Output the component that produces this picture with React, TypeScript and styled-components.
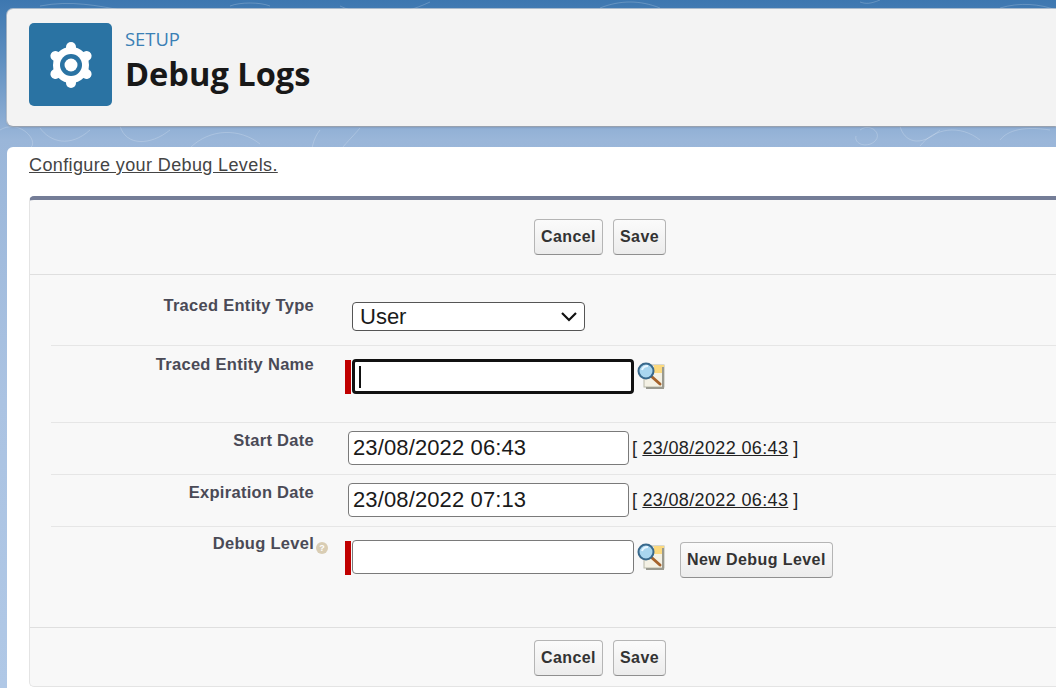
import React from "react";
import styled, { createGlobalStyle } from "styled-components";

const Global = createGlobalStyle`
  html, body { margin: 0; padding: 0; height: 100%; overflow: hidden; }
  body { font-family: "Liberation Sans", Arial, sans-serif; }
`;

const Page = styled.div`
  position: relative;
  width: 1056px;
  height: 688px;
  overflow: hidden;
  box-sizing: border-box;
  padding: 9px 0 0 7px;
  background: linear-gradient(180deg, #3d77b0 0px, #5f8fc0 60px, #9ab6d9 140px, #abc3e2 400px, #b0c8e6 688px);
`;

const Topo = styled.svg`
  position: absolute;
  inset: 0;
  width: 1056px;
  height: 160px;
  fill: none;
  stroke: #ffffff;
  stroke-opacity: 0.2;
  stroke-width: 1;
`;

const HeaderCard = styled.header`
  position: relative;
  display: flex;
  align-items: flex-start;
  gap: 13px;
  height: 117px;
  box-sizing: border-box;
  padding: 14px 0 0 22px;
  background: #f3f3f3;
  border-radius: 6px 0 0 6px;
  box-shadow: 0 1px 2px rgba(60, 70, 90, 0.45), 0 0 0 1px rgba(220, 220, 220, 0.7);
`;

const IconTile = styled.div`
  display: flex;
  align-items: center;
  justify-content: center;
  width: 83px;
  height: 83px;
  border-radius: 5px;
  background: #2a73a3;
`;

const HeaderText = styled.div`
  display: flex;
  flex-direction: column;
`;

const Eyebrow = styled.div`
  font-family: "Open Sans", sans-serif;
  font-size: 18.4px;
  line-height: 24px;
  margin-top: 4px;
  color: #3a80b5;
`;

const Title = styled.h1`
  margin: 4px 0 0;
  font-family: "Open Sans", sans-serif;
  font-weight: 700;
  font-size: 32.6px;
  line-height: 38px;
  color: #181818;
`;

const Panel = styled.main`
  position: relative;
  height: 541px;
  margin-top: 21px;
  box-sizing: border-box;
  padding: 8px 0 0 22px;
  background: #ffffff;
  border-radius: 6px 0 0 0;
`;

const TopLink = styled.a`
  display: block;
  font-size: 18px;
  letter-spacing: 0.38px;
  line-height: 20px;
  color: #444444;
  text-decoration: underline;
`;

const Block = styled.section`
  margin-top: 21px;
  height: 491px;
  box-sizing: border-box;
  background: #f8f8f8;
  border-top: 4px solid #747d97;
  border-left: 1px solid #e4e4e4;
  border-bottom: 1px solid #e4e4e4;
  border-radius: 5px 0 0 5px;
`;

const ButtonBar = styled.div<{ $bottom?: boolean }>`
  display: flex;
  justify-content: center;
  gap: 10px;
  height: ${(p) => (p.$bottom ? 59 : 75)}px;
  width: 1140px;
  box-sizing: border-box;
  padding-top: ${(p) => (p.$bottom ? 12 : 19)}px;
  ${(p) => (p.$bottom ? "border-top" : "border-bottom")}: 1px solid #dfdfdf;
`;

const Btn = styled.button`
  height: 36px;
  box-sizing: border-box;
  padding: 0 6px;
  font-family: "Liberation Sans", sans-serif;
  font-weight: 700;
  font-size: 16px;
  letter-spacing: 0.42px;
  color: #333333;
  border: 1px solid #b5b5b5;
  border-bottom-color: #8f8f8f;
  border-radius: 4px;
  background: linear-gradient(180deg, #fbfbfb, #ececec);
`;

const FormBody = styled.div`
  height: 352px;
  box-sizing: border-box;
  padding-left: 21px;
`;

const Row = styled.div<{ $h: number; $last?: boolean }>`
  display: grid;
  grid-template-columns: 263px 1fr;
  column-gap: 31px;
  height: ${(p) => p.$h}px;
  box-sizing: border-box;
  border-bottom: ${(p) => (p.$last ? "none" : "1px solid #e6e6e6")};
`;

const Label = styled.label<{ $top: number }>`
  display: block;
  padding-top: ${(p) => p.$top}px;
  text-align: right;
  font-weight: 700;
  font-size: 16.5px;
  letter-spacing: 0.28px;
  line-height: 18px;
  color: #4a4a56;
`;

const Field = styled.div<{ $top: number }>`
  display: flex;
  align-items: flex-start;
  padding-top: ${(p) => p.$top}px;
`;

const SelectWrap = styled.span`
  position: relative;
  display: inline-flex;
  margin-left: 7px;
`;

const SelectBox = styled.select`
  appearance: none;
  width: 233px;
  height: 29px;
  padding: 0 0 0 7px;
  box-sizing: border-box;
  font-family: "Liberation Sans", sans-serif;
  font-size: 22px;
  color: #1a1a1a;
  background: #fff;
  border: 1px solid #555;
  border-radius: 4px;
`;

const Chevron = styled.svg`
  position: absolute;
  right: 7px;
  top: 9px;
  pointer-events: none;
`;

const RequiredBar = styled.span`
  flex: none;
  width: 6px;
  height: 34px;
  margin-top: 1px;
  background: #c00000;
`;

const TextInput = styled.input<{ $focus?: boolean; $w?: number }>`
  width: ${(p) => p.$w ?? 282}px;
  height: ${(p) => (p.$focus ? 35 : 34)}px;
  box-sizing: border-box;
  padding: 0 4px;
  font-family: "Liberation Sans", sans-serif;
  font-size: 22px;
  letter-spacing: 0.12px;
  color: #1a1a1a;
  background: #fff;
  border: ${(p) => (p.$focus ? "3px solid #111" : "1px solid #7a7a7a")};
  border-radius: 4px;
  outline: none;
`;

const DateInput = styled(TextInput)`
  margin-left: 3px;
`;

const Caret = styled.span`
  position: absolute;
  left: 7px;
  top: 7px;
  width: 2px;
  height: 22px;
  background: #111;
`;

const InputWrap = styled.span`
  position: relative;
  display: inline-flex;
  margin-left: 1px;
`;

const DateLink = styled.span`
  margin: 7px 0 0 3px;
  font-size: 18px;
  letter-spacing: 0.36px;
  line-height: 20px;
  color: #222;
  a { color: #222; text-decoration: underline; margin: 0 5px 0 5px; }
`;

const HelpDot = styled.span`
  display: inline-flex;
  align-items: center;
  justify-content: center;
  width: 12px;
  height: 12px;
  margin: 0 -14px 0 2px;
  vertical-align: -2px;
  border-radius: 50%;
  background: #d9cdb4;
  color: #fff;
  font-size: 9px;
  line-height: 12px;
  letter-spacing: 0;
`;

const NewBtn = styled(Btn)`
  margin: 2px 0 0 14px;
`;

const LookupSvg = styled.svg`
  flex: none;
  margin: 2px 0 0 2px;
`;

function Lookup() {
  return (
    <LookupSvg width="30" height="28" viewBox="0 0 30 28">
      <rect x="8" y="4" width="20" height="22" fill="#f4f1e4" stroke="#b8b8a8" />
      <path d="M18 4h10v8H18z" fill="#fbd97f" />
      <path d="M27 6v21H10" fill="none" stroke="#9a9a90" strokeWidth="2" />
      <path d="M15 15l9 8" stroke="#a5622b" strokeWidth="3" strokeLinecap="round" />
      <circle cx="10" cy="10" r="7.5" fill="#a9d6ef" stroke="#39698c" strokeWidth="2" />
      <path d="M6 9c1-3 3-4 6-4" stroke="#e8f6ff" strokeWidth="2" fill="none" />
    </LookupSvg>
  );
}

const GEAR_ANGLES = [-90, -30, 30, 90, 150, 210];

function Gear() {
  return (
    <svg width="46" height="48" viewBox="-23 -24 46 48">
      <circle r="18" fill="#fff" />
      {GEAR_ANGLES.map((a) => (
        <line
          key={a}
          x1="0"
          y1="0"
          x2={18 * Math.cos((a * Math.PI) / 180)}
          y2={18 * Math.sin((a * Math.PI) / 180)}
          stroke="#fff"
          strokeWidth="10"
          strokeLinecap="round"
        />
      ))}
      <circle r="11" fill="#2a73a3" />
      <circle r="6.5" fill="#fff" />
    </svg>
  );
}

export default function App() {
  return (
    <Page>
      <Global />
      <Topo viewBox="0 0 1056 160">
        <path d="M0 130c20-12 40 12 30 18M40 128c10 14 30 20 50 2M120 126c6 20 30 20 50 4M190 148c20-20 50-20 70-4M320 130c-8 10-8 20-10 30M360 128c-10 12-20 20-24 30M860 130c10-8 24 4 14 12-8 6-20 2-18-6M900 126c4 16 20 22 40 4M920 146c14-18 40-22 60-6M1000 140c8-10 24-14 50-10" />
        <path d="M340 6c30 14 60 10 90-4M860 2c6 2 10 2 20-2M1000 8c20-6 40-4 56 2M40 6c30-6 60 0 80 4M600 8c20-8 40-8 60 0M230 6c10-4 30-4 40 0" />
      </Topo>
      <HeaderCard>
        <IconTile>
          <Gear />
        </IconTile>
        <HeaderText>
          <Eyebrow>SETUP</Eyebrow>
          <Title>Debug Logs</Title>
        </HeaderText>
      </HeaderCard>
      <Panel>
        <TopLink>Configure your Debug Levels.</TopLink>
        <Block>
          <ButtonBar>
            <Btn>Cancel</Btn>
            <Btn>Save</Btn>
          </ButtonBar>
          <FormBody>
            <Row $h={71}>
              <Label $top={21}>Traced Entity Type</Label>
              <Field $top={27}>
                <SelectWrap>
                  <SelectBox defaultValue="User">
                    <option>User</option>
                  </SelectBox>
                  <Chevron width="18" height="12" viewBox="0 0 18 12">
                    <path d="M2 2l7 7 7-7" fill="none" stroke="#111" strokeWidth="2.2" />
                  </Chevron>
                </SelectWrap>
              </Field>
            </Row>
            <Row $h={77}>
              <Label $top={9}>Traced Entity Name</Label>
              <Field $top={13}>
                <RequiredBar />
                <InputWrap>
                  <TextInput $focus readOnly />
                  <Caret />
                </InputWrap>
                <Lookup />
              </Field>
            </Row>
            <Row $h={52}>
              <Label $top={8}>Start Date</Label>
              <Field $top={8}>
                <DateInput $w={281} readOnly value="23/08/2022 06:43" />
                <DateLink>
                  [<a>23/08/2022 06:43</a>]
                </DateLink>
              </Field>
            </Row>
            <Row $h={52}>
              <Label $top={8}>Expiration Date</Label>
              <Field $top={8}>
                <DateInput $w={281} readOnly value="23/08/2022 07:13" />
                <DateLink>
                  [<a>23/08/2022 06:43</a>]
                </DateLink>
              </Field>
            </Row>
            <Row $h={100} $last>
              <Label $top={7}>
                Debug Level
                <HelpDot>?</HelpDot>
              </Label>
              <Field $top={13}>
                <RequiredBar />
                <InputWrap>
                  <TextInput readOnly />
                </InputWrap>
                <Lookup />
                <NewBtn>New Debug Level</NewBtn>
              </Field>
            </Row>
          </FormBody>
          <ButtonBar $bottom>
            <Btn>Cancel</Btn>
            <Btn>Save</Btn>
          </ButtonBar>
        </Block>
      </Panel>
    </Page>
  );
}
